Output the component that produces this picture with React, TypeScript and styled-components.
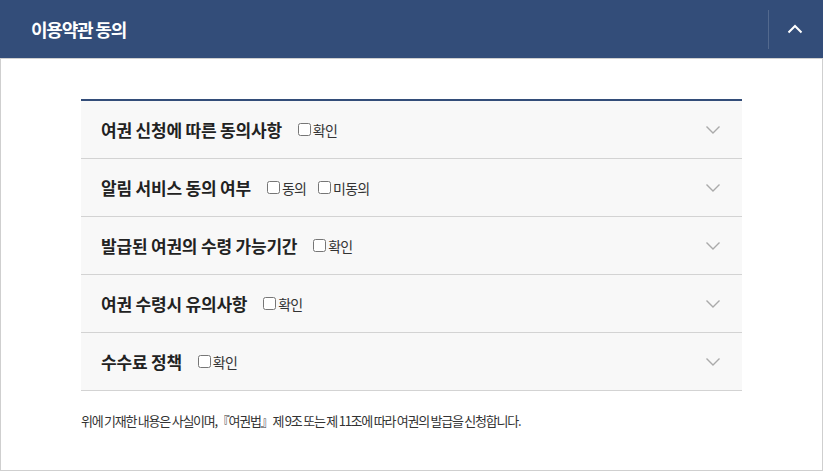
import React from "react";
import styled, { createGlobalStyle } from "styled-components";

const GlobalStyle = createGlobalStyle`
  html, body { margin: 0; padding: 0; background: #ffffff; }
  body { font-family: "Noto Sans CJK KR", "Noto Sans", sans-serif; }
  * { box-sizing: border-box; }
`;

const Panel = styled.section`
  width: 823px;
  height: 471px;
  display: flex;
  flex-direction: column;
`;

const Header = styled.header`
  height: 58px;
  flex: none;
  background: #334d79;
  display: flex;
  align-items: center;
  padding-left: 31px;
`;

const Title = styled.h2`
  flex: 1;
  margin: 0;
  color: #ffffff;
  font-size: 18px;
  font-weight: 700;
  letter-spacing: -1.2px;
`;

const ToggleButton = styled.button`
  width: 55px;
  height: 39px;
  padding: 0 2px 0 0;
  border: none;
  border-left: 1px solid rgba(255, 255, 255, 0.16);
  background: transparent;
  display: flex;
  align-items: center;
  justify-content: center;
  cursor: pointer;
`;

const Body = styled.div`
  flex: 1;
  border: 1px solid #cfcfcf;
  padding: 40px 80px 0;
`;

const List = styled.ul`
  list-style: none;
  margin: 0;
  padding: 0;
  border-top: 2px solid #334d79;
`;

const Row = styled.li`
  height: 58px;
  background: #f8f8f8;
  border-bottom: 1px solid #d3d3d3;
  display: flex;
  align-items: center;
  padding: 0 21px 0 20px;
`;

const RowTitle = styled.span`
  font-size: 17px;
  font-weight: 700;
  color: #222222;
  letter-spacing: -0.2px;
  margin-right: 16px;
`;

const Options = styled.div`
  flex: 1;
  display: flex;
  align-items: center;
  gap: 12px;
`;

const Check = styled.label`
  display: inline-flex;
  align-items: center;
  gap: 2px;
  font-size: 14px;
  color: #333333;
  letter-spacing: -0.8px;
  cursor: pointer;

  input {
    margin: 0;
    width: 13px;
    height: 13px;
  }
`;

const Notice = styled.p`
  margin: 20px 0 0;
  font-size: 13px;
  line-height: 20px;
  color: #333333;
  letter-spacing: -1.25px;
`;

const Chevron = ({ up, color }: { up?: boolean; color: string }) => (
  <svg width="16" height="10" viewBox="0 0 16 10" fill="none">
    <path
      d={up ? "M1.5 8.5 L8 2 L14.5 8.5" : "M1.5 1.5 L8 8 L14.5 1.5"}
      stroke={color}
      strokeWidth={up ? 2 : 1.4}
    />
  </svg>
);

const items: { title: string; options: string[] }[] = [
  { title: "여권 신청에 따른 동의사항", options: ["확인"] },
  { title: "알림 서비스 동의 여부", options: ["동의", "미동의"] },
  { title: "발급된 여권의 수령 가능기간", options: ["확인"] },
  { title: "여권 수령시 유의사항", options: ["확인"] },
  { title: "수수료 정책", options: ["확인"] },
];

export default function App() {
  return (
    <>
      <GlobalStyle />
      <Panel>
        <Header>
          <Title>이용약관 동의</Title>
          <ToggleButton aria-label="접기">
            <Chevron up color="#ffffff" />
          </ToggleButton>
        </Header>
        <Body>
          <List>
            {items.map((it) => (
              <Row key={it.title}>
                <RowTitle>{it.title}</RowTitle>
                <Options>
                  {it.options.map((o) => (
                    <Check key={o}>
                      <input type="checkbox" />
                      {o}
                    </Check>
                  ))}
                </Options>
                <Chevron color="#aaaaaa" />
              </Row>
            ))}
          </List>
          <Notice>
            위에 기재한 내용은 사실이며,『여권법』제 9조 또는 제 11조에 따라 여권의 발급을 신청합니다.
          </Notice>
        </Body>
      </Panel>
    </>
  );
}
